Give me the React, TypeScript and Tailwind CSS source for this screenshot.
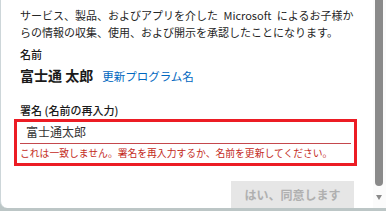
export default function App() {
  return (
    <div
      className="w-[386px] h-[211px] overflow-hidden bg-[#bcc6c6]"
      style={{ fontFamily: '"Noto Sans CJK JP", "Noto Sans", sans-serif' }}
    >
      <div className="flex h-[208px] rounded-bl-[7px] border-l border-[#cdd6d9] bg-white">
        <div className="flex-1 pl-[13px] pr-[16px] pt-[7px] text-[#262626]">
          <p className="pl-[6px] text-[11px] leading-[17px] whitespace-nowrap">
            <span className="[word-spacing:3px]">サービス、製品、およびアプリを介した Microsoft によるお子様か</span>
            <br />
            らの情報の収集、使用、および開示を承認したことになります。
          </p>
          <div className="mt-[5px] pl-[6px] text-[11px] leading-[16px] font-medium text-[#1a1a1a]">名前</div>
          <div className="mt-[3px] flex items-baseline gap-[9px] pl-[6px] leading-[20px]">
            <span className="text-[14px] font-bold text-[#1a1a1a]">富士通 太郎</span>
            <span className="text-[11.5px] text-[#0067c0]">更新プログラム名</span>
          </div>
          <div className="mt-[16px] pl-[6px] text-[11px] leading-[17px] font-medium text-[#1a1a1a]">
            署名 (名前の再入力)
          </div>
          <div className="border-[3px] border-[#ec1c24]">
            <div className="h-[21px] pl-[9px] text-[12px] leading-[20px] text-[#333]">富士通太郎</div>
            <div className="mx-[3px] h-px bg-[#c4484d]" />
            <div className="pl-[3px] text-[9.8px] leading-[19px] text-[#c42b1c] whitespace-nowrap">
              これは一致しません。署名を再入力するか、名前を更新してください。
            </div>
          </div>
          <div className="mt-[15px] flex justify-end pr-[3px]">
            <div className="flex h-[27px] w-[123px] items-center justify-center bg-[#e6e6e6] text-[12px] font-bold text-[#b0b0b0]">
              はい、同意します
            </div>
          </div>
        </div>
        <div className="flex w-[13px] flex-col items-start pl-[2px] bg-[#fbfbfb]">
          <div className="h-[186px] w-[8px] rounded-b-[4px] bg-[#8a8a8a]" />
          <div className="mt-[9px] ml-[1px] h-0 w-0 border-x-[3px] border-t-[5px] border-x-transparent border-t-[#8a8a8a]" />
        </div>
      </div>
    </div>
  );
}
